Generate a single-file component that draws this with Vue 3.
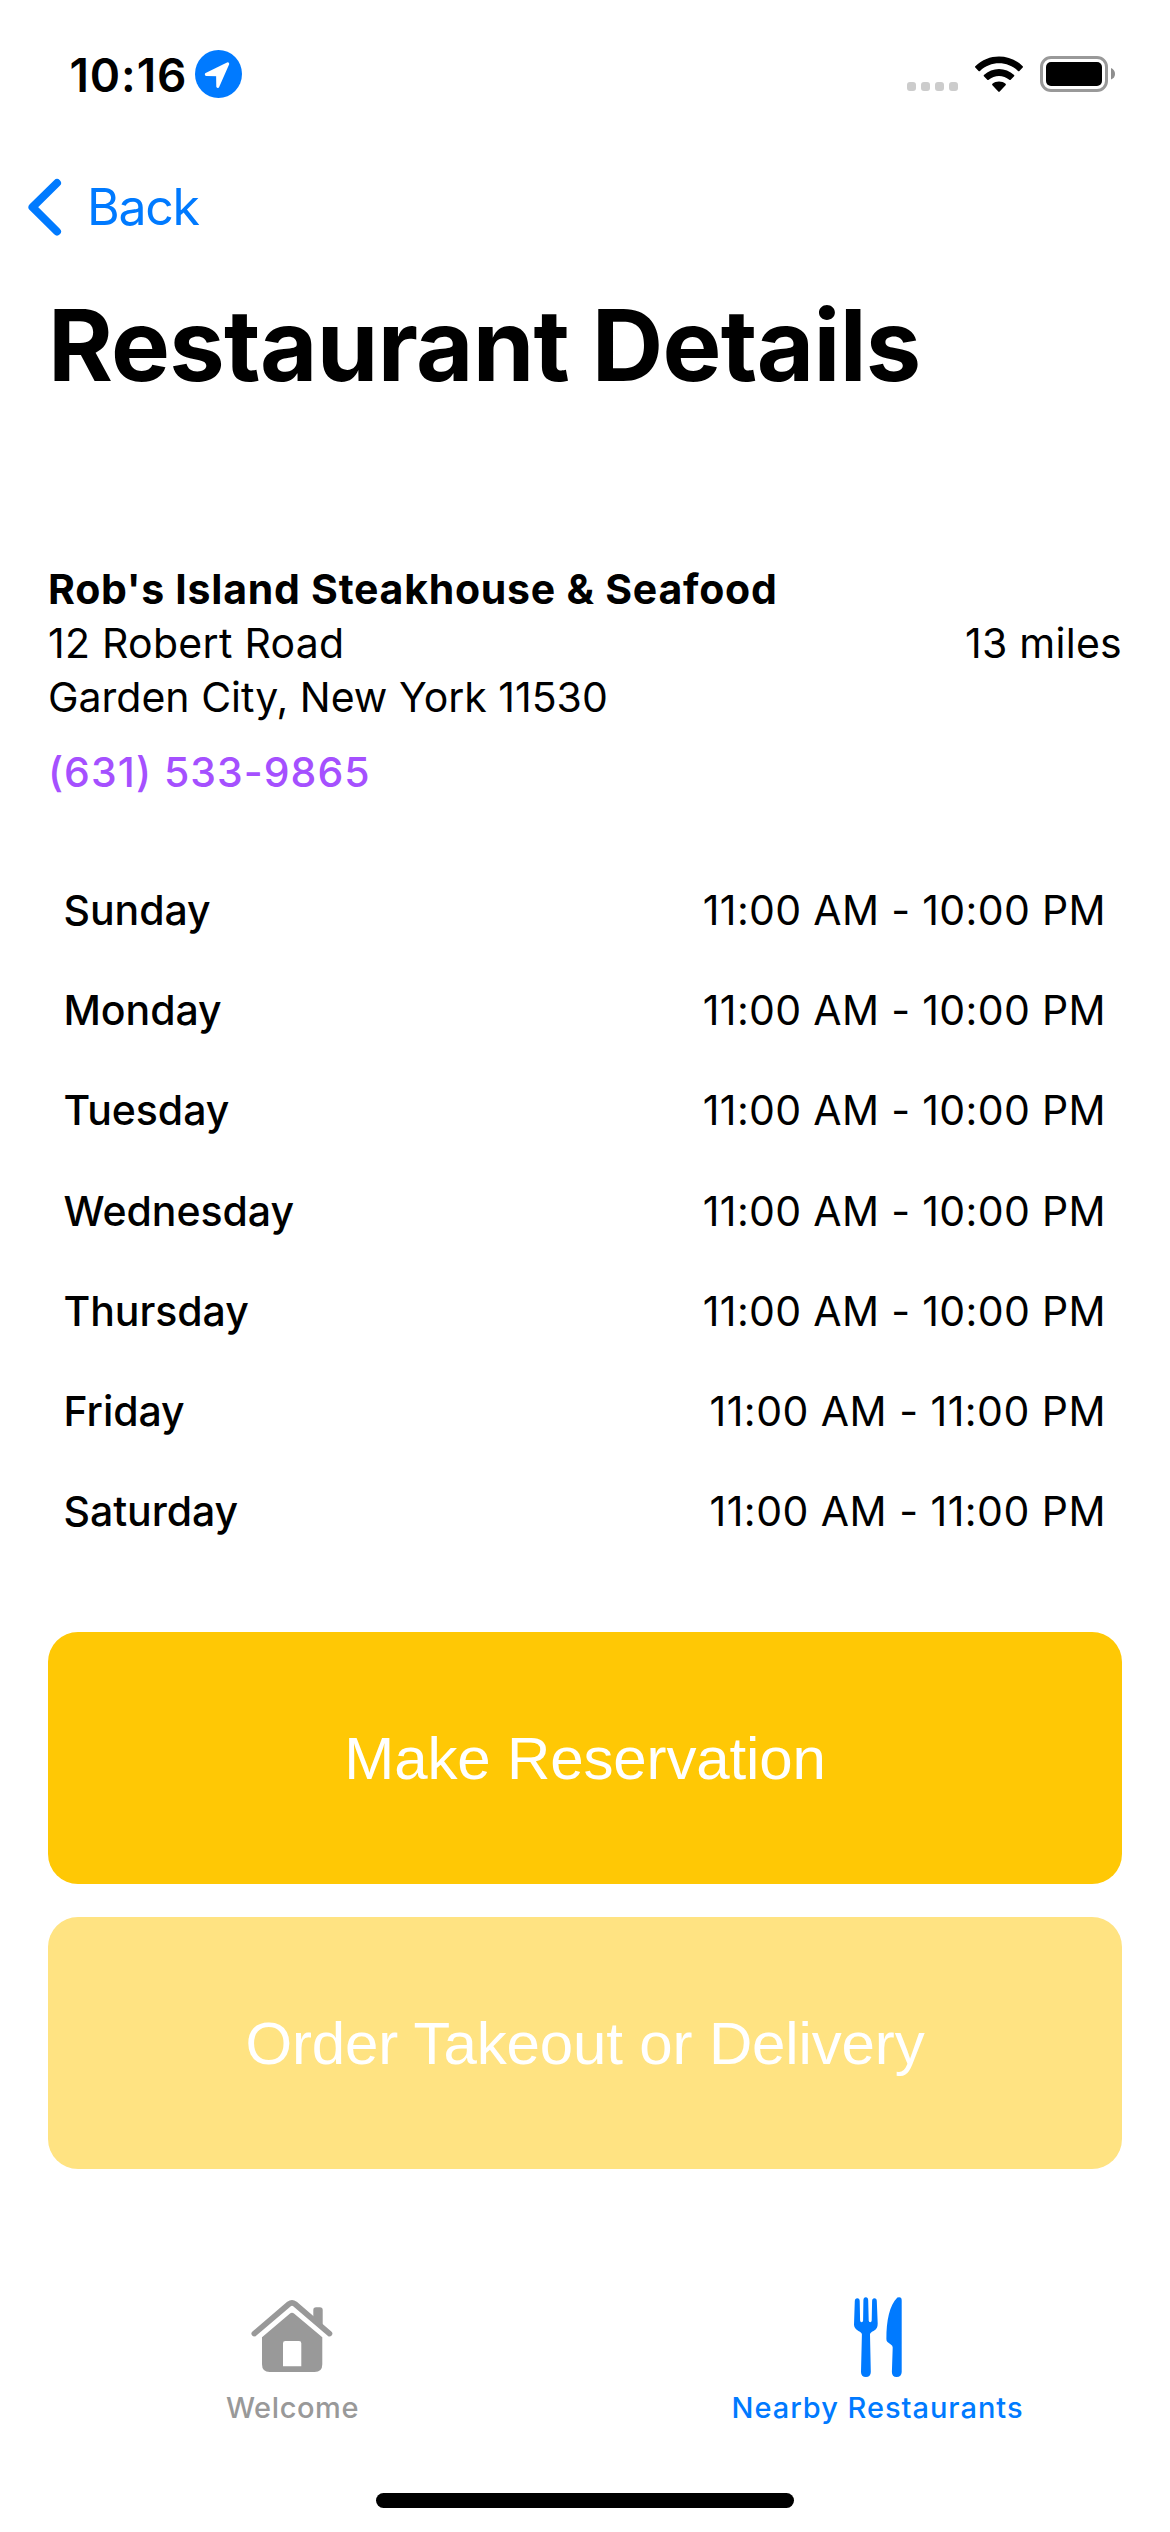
<script setup>
const weekday = '11:00 AM - 10:00 PM'
const weekend = '11:00 AM - 11:00 PM'
const hours = [
  { day: 'Sunday', time: weekday },
  { day: 'Monday', time: weekday },
  { day: 'Tuesday', time: weekday },
  { day: 'Wednesday', time: weekday },
  { day: 'Thursday', time: weekday },
  { day: 'Friday', time: weekend },
  { day: 'Saturday', time: weekend },
]
</script>

<template>
  <div class="screen">
    <header class="status">
      <div class="clock">
        <span class="time">10:16</span>
        <svg class="location" width="47" height="48" viewBox="0 0 47 48">
          <ellipse cx="23.5" cy="24" rx="23.5" ry="24" fill="#007aff" />
          <path d="M11.3 24.4 L32.7 13.8 L22.8 36.4 L22.6 24.7 Z" fill="#fff" stroke="#fff" stroke-width="3" stroke-linejoin="round" />
        </svg>
      </div>
      <div class="indicators">
        <div class="signal"><i v-for="n in 4" :key="n"></i></div>
        <svg class="wifi" width="50" height="38" viewBox="0 0 50 38">
          <path d="M1.3 10.2 C14.6 -2.8 35.4 -2.8 48.7 10.2 Q49.3 10.9 48.7 11.5 L45.4 14.9 Q44.7 15.5 44 14.9 C33.3 4.8 16.7 4.8 6 14.9 Q5.3 15.5 4.6 14.9 L1.3 11.5 Q.7 10.9 1.3 10.2 Z" />
          <path d="M9.9 19 C18.4 11 31.6 11 40.1 19 Q40.7 19.7 40.1 20.3 L36.7 23.7 Q36 24.3 35.3 23.7 C29.5 18.6 20.5 18.6 14.7 23.7 Q14 24.3 13.3 23.7 L9.9 20.3 Q9.3 19.7 9.9 19 Z" />
          <path d="M18.4 27.8 C22.1 24.7 27.9 24.7 31.6 27.8 Q32.3 28.5 31.6 29.2 L25.7 35.6 Q25 36.4 24.3 35.6 L18.4 29.2 Q17.7 28.5 18.4 27.8 Z" />
        </svg>
        <svg class="battery" width="76" height="36" viewBox="0 0 76 36">
          <rect x="1.5" y="1.5" width="65" height="33" rx="9.5" fill="none" stroke="#999" stroke-width="3" />
          <rect x="6" y="6" width="56" height="24" rx="5" fill="#000" />
          <path d="M71 12 Q75 13.8 75 18 Q75 22 71 23.5 Z" fill="#8e8e8e" />
        </svg>
      </div>
    </header>

    <nav class="nav">
      <svg width="36" height="60" viewBox="0 0 36 60">
        <path d="M31 6 L6.5 30.2 L31 54.5" fill="none" stroke="#007aff" stroke-width="8" stroke-linecap="round" stroke-linejoin="round" />
      </svg>
      <a class="back">Back</a>
    </nav>

    <h1 class="title">Restaurant Details</h1>

    <main class="content">
      <section class="info">
        <div class="address">
          <strong class="name">Rob's Island Steakhouse &amp; Seafood</strong>
          <span class="street">12 Robert Road</span>
          <span>Garden City, New York 11530</span>
        </div>
        <span class="distance">13 miles</span>
      </section>
      <a class="phone">(631) 533-9865</a>

      <ul class="hours">
        <li v-for="h in hours" :key="h.day">
          <span class="day">{{ h.day }}</span>
          <span class="range" :class="{ late: h.time === weekend }">{{ h.time }}</span>
        </li>
      </ul>

      <div class="actions">
        <button class="action">Make Reservation</button>
        <button class="action muted">Order Takeout or Delivery</button>
      </div>
    </main>

    <footer class="tabs">
      <div class="tab">
        <svg width="84" height="82" viewBox="0 0 84 82">
          <g transform="translate(-.7 1)">
            <path d="M4 36.6 L38.7 7 Q41.7 4.6 44.7 7 L79.2 36.6" fill="none" stroke="#999" stroke-width="5.6" stroke-linecap="round" stroke-linejoin="round" />
            <path d="M63 24 V13 Q63 10.2 65.8 10.2 H69.6 Q72.4 10.2 72.4 13 V29 Z" fill="#999" />
            <path fill-rule="evenodd" d="M11.7 40.3 L39.4 16.8 Q41.7 14.8 44 16.8 L72 40.3 V67.3 Q72 75 64.3 75 H19.4 Q11.7 75 11.7 67.3 Z M35 44 Q32.7 44 32.7 46.3 V69.2 H51 V46.3 Q51 44 48.7 44 Z" fill="#999" />
          </g>
        </svg>
        <span>Welcome</span>
      </div>
      <div class="tab active">
        <svg width="50" height="82" viewBox="0 0 50 82">
          <path d="M1.8 5 Q2 2.2 4.3 2.2 Q6.6 2.2 6.7 5 L7.1 24.5 Q7.2 26.2 8.6 26.2 Q10 26.2 10.1 24.5 L10.4 4.2 Q10.5 1.3 12.8 1.3 Q15.1 1.3 15.2 4.2 L15.7 24.5 Q15.8 26.2 17.2 26.2 Q18.6 26.2 18.7 24.5 L19.1 5 Q19.2 2.2 21.4 2.2 Q23.7 2.2 23.8 5 L24.7 27.5 Q24.8 33.3 20.5 34.9 Q17 36.4 17 38.5 L17.8 76 Q17.7 81 12.9 81 Q8.1 81 8 76 L8.9 38.5 Q8.9 36.4 5.4 34.9 Q.9 32.4 1 28.5 Z" />
          <path d="M44.4 1.6 Q48.7 .2 48.7 4.5 V76 Q48.5 81 43.6 81 Q38.9 81 38.9 76 L39.7 51.5 Q39.7 49.8 37.8 48.6 L34.5 46.1 Q33.3 45.2 33.4 43 C33.3 25 36.4 9.5 44.4 1.6 Z" />
        </svg>
        <span>Nearby Restaurants</span>
      </div>
    </footer>
    <div class="home-bar"></div>
  </div>
</template>

<style>
body {
  background: #fff;
}
</style>

<style scoped>
.screen {
  width: 1170px;
  height: 2532px;
  box-sizing: border-box;
  display: flex;
  flex-direction: column;
  overflow: hidden;
  background: #fff;
  color: #000;
  font-family: Inter, 'Liberation Sans', sans-serif;
  font-size: 41px;
  line-height: 54px;
  white-space: nowrap;
}
.status {
  height: 150px;
  flex: none;
  display: flex;
  justify-content: space-between;
  align-items: center;
  padding: 0 54px 0 69.5px;
}
.clock {
  display: flex;
  align-items: center;
}
.time {
  width: 125.5px;
  font-size: 46px;
  font-weight: 600;
  letter-spacing: 0.9px;
}
.location {
  margin-top: -2px;
}
.indicators {
  display: flex;
  align-items: center;
}
.signal {
  display: flex;
  gap: 5px;
  margin: 23px 16px 0 0;
}
.signal i {
  width: 9px;
  height: 9px;
  border-radius: 3px;
  background: #ccc;
}
.wifi {
  margin: -1px 16px 0 0;
}
.battery {
  margin-top: -2px;
}
.nav {
  height: 114px;
  flex: none;
  display: flex;
  align-items: center;
  padding-left: 26px;
  color: #007aff;
}
.back {
  margin-left: 25px;
  font-size: 50px;
  line-height: 60px;
  letter-spacing: -1.3px;
}
.title {
  height: 162px;
  flex: none;
  margin: 0;
  padding-left: 48px;
  font-size: 99px;
  line-height: 162px;
  font-weight: 700;
  letter-spacing: -0.73px;
}
.content {
  display: flex;
  flex-direction: column;
  padding: 136px 48px 0;
}
.info {
  display: flex;
  justify-content: space-between;
  align-items: center;
}
.address {
  display: flex;
  flex-direction: column;
}
.name {
  font-weight: 700;
  letter-spacing: 0.75px;
}
.street {
  letter-spacing: 0.28px;
}
.distance {
  letter-spacing: 0.26px;
}
.phone {
  margin-top: 21px;
  font-weight: 500;
  letter-spacing: 1.01px;
  color: #a550ff;
}
.hours {
  list-style: none;
  margin: 61px 0 70.6px;
  padding: 0 16px 0 15.5px;
}
.hours li {
  height: 100.2px;
  display: flex;
  align-items: center;
  justify-content: space-between;
}
.day {
  font-weight: 500;
  letter-spacing: -0.05px;
}
.range {
  letter-spacing: 0.35px;
}
.late {
  letter-spacing: 0.48px;
}
.actions {
  display: flex;
  flex-direction: column;
  gap: 33px;
}
.action {
  height: 252px;
  border: 0;
  border-radius: 30px;
  padding: 2px 0 0;
  background: #ffc805;
  color: #fff;
  font-family: 'Liberation Sans', sans-serif;
  font-size: 60px;
  letter-spacing: -0.14px;
}
.muted {
  background: #ffe382;
}
.tabs {
  display: flex;
  margin-top: auto;
  height: 197px;
  flex: none;
}
.tab {
  flex: 1;
  display: flex;
  flex-direction: column;
  align-items: center;
  color: #999;
  font-size: 29px;
  line-height: 36px;
  font-weight: 500;
  letter-spacing: 0.6px;
}
.tab svg {
  height: 82px;
  margin-bottom: 12px;
  fill: currentColor;
}
.active {
  color: #007aff;
  letter-spacing: 0.98px;
}
.home-bar {
  width: 418px;
  height: 15px;
  flex: none;
  margin: 0 auto 24px;
  border-radius: 8px;
  background: #000;
}
</style>
